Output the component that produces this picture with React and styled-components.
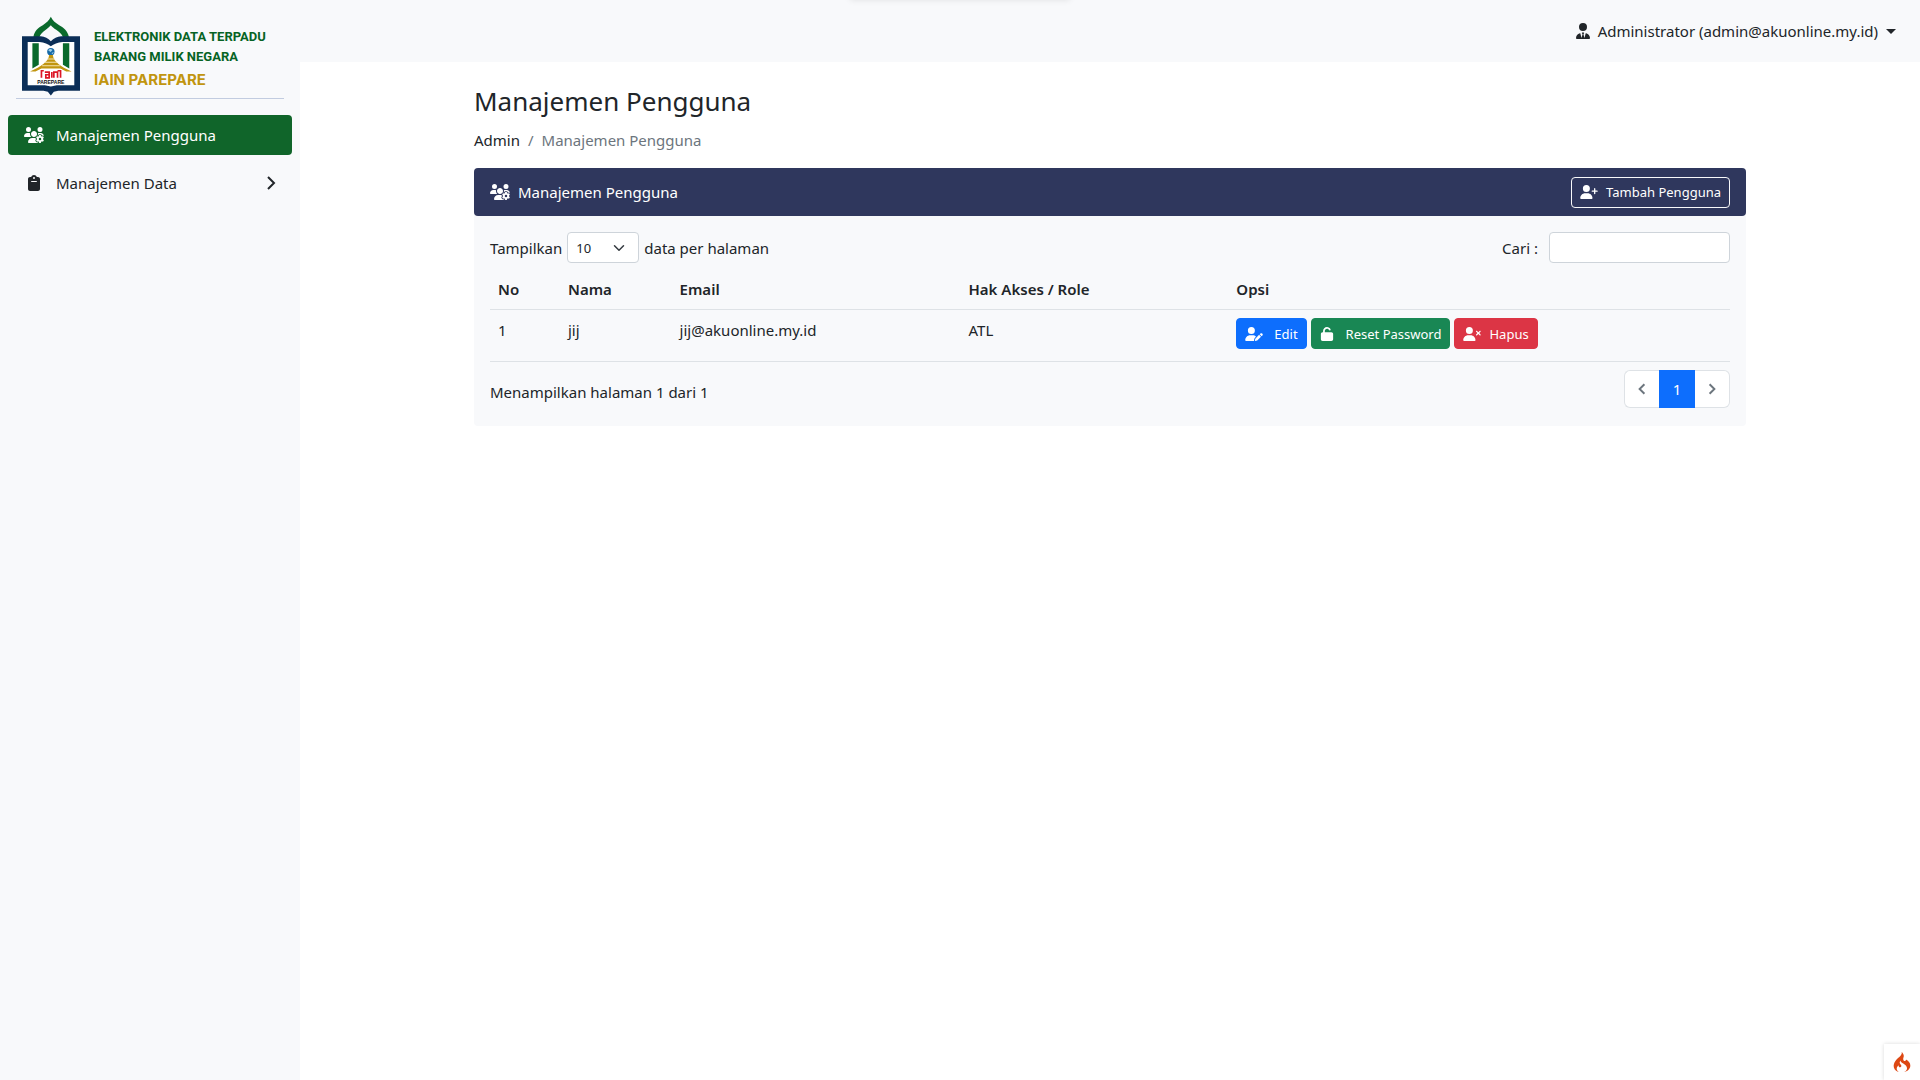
import React from 'react';
import styled, { createGlobalStyle } from 'styled-components';
import {
  FaUsersGear, FaUserTie, FaUserPlus, FaUserPen, FaUserXmark, FaUnlock, FaClipboard,
} from 'react-icons/fa6';
import { SiCodeigniter } from 'react-icons/si';

const GlobalStyle = createGlobalStyle`
  *, *::before, *::after { box-sizing: border-box; }
  body {
    margin: 0;
    background: #fff;
    color: #212529;
    font-family: "Noto Sans", "Open Sans", sans-serif;
    font-size: 15px;
    line-height: 24px;
  }
  button, input, select { font: inherit; color: inherit; }
  a { color: inherit; text-decoration: none; }
`;

const Shell = styled.div`
  display: flex;
  min-height: 100vh;
`;

const Sidebar = styled.aside`
  flex: none;
  width: 300px;
  padding: 16px 8px;
  background: #f8f9fb;
`;

const Brand = styled.a`
  display: flex;
  align-items: flex-start;
  gap: 14px;
  height: 83px;
  margin: 0 8px 16px;
  padding-left: 6px;
  border-bottom: 1px solid #c2cce0;
`;

const Emblem = styled.svg`
  flex: none;
  width: 58px;
  height: 80px;
`;

const BrandText = styled.span`
  display: flex;
  flex-direction: column;
  padding-top: 11px;
`;

const BrandLine = styled.span`
  color: #066324;
  font-family: Roboto, "Liberation Sans", sans-serif;
  font-size: 13px;
  font-weight: 700;
  line-height: 20px;
  white-space: nowrap;
`;

const BrandOrg = styled.span`
  color: #c1950f;
  font-family: Inter, sans-serif;
  font-size: 15px;
  font-weight: 700;
  line-height: 26px;
`;

const NavList = styled.nav`
  display: flex;
  flex-direction: column;
  gap: 8px;
`;

const NavItem = styled.a`
  display: flex;
  align-items: center;
  gap: 12px;
  height: 40px;
  padding: 0 16px;
  border-radius: 4px;
  background: ${(p) => (p.$active ? '#10652a' : 'transparent')};
  color: ${(p) => (p.$active ? '#fff' : '#212529')};
`;

const NavIcon = styled.span`
  display: flex;
  justify-content: center;
  width: 20px;
`;

const NavArrow = styled.svg`
  width: 10px;
  height: 16px;
  margin-left: auto;
`;

const Icon = styled.svg`
  flex: none;
  width: ${(p) => p.$w}px;
  height: ${(p) => p.$h || 16}px;
`;

const Content = styled.div`
  flex: 1;
  min-width: 0;
`;

const Topbar = styled.header`
  display: flex;
  align-items: center;
  justify-content: flex-end;
  height: 62px;
  padding: 0 24px;
  background: #f8f9fb;
`;

const UserMenu = styled.button`
  display: flex;
  align-items: center;
  gap: 8px;
  padding: 0;
  border: 0;
  background: none;
`;

const Caret = styled.span`
  border-top: 5px solid;
  border-left: 5px solid transparent;
  border-right: 5px solid transparent;
`;

const Main = styled.main`
  max-width: 1320px;
  margin: 0 auto;
  padding: 24px;
`;

const Title = styled.h1`
  margin: 0 0 12px;
  font-size: 26px;
  font-weight: 400;
  line-height: 30px;
`;

const Breadcrumb = styled.nav`
  display: flex;
  gap: 8px;
  margin-bottom: 16px;
  color: #6c757d;
`;

const Crumb = styled.a`
  color: #212529;
`;

const Card = styled.section`
  border-radius: 4px;
  background: #f8f9fb;
`;

const CardHeader = styled.div`
  display: flex;
  align-items: center;
  justify-content: space-between;
  height: 48px;
  padding: 0 16px;
  border-radius: 4px;
  background: #2f375d;
  color: #fff;
`;

const CardTitle = styled.h2`
  display: flex;
  align-items: center;
  gap: 8px;
  margin: 0;
  font-size: 15px;
  font-weight: 400;
`;

const CardBody = styled.div`
  padding: 16px 16px 18px;
`;

const Button = styled.button`
  display: inline-flex;
  align-items: center;
  gap: ${(p) => p.$gap || 8}px;
  height: 31px;
  padding: 0 8px;
  border: 1px solid ${(p) => p.$border || p.$fill};
  border-radius: 4px;
  background: ${(p) => p.$fill};
  color: #fff;
  font-size: 13px;
  white-space: nowrap;
`;

const Actions = styled.div`
  display: flex;
  gap: 4px;
`;

const Tools = styled.div`
  display: flex;
  justify-content: space-between;
  margin-bottom: 6px;
`;

const Field = styled.label`
  display: flex;
  align-items: center;
  gap: ${(p) => p.$gap}px;
`;

const SelectBox = styled.span`
  display: grid;
  align-items: center;
  width: 72px;

  > * { grid-area: 1 / 1; }
`;

const Select = styled.select`
  appearance: none;
  width: 100%;
  height: 31px;
  padding: 0 8px;
  border: 1px solid #ced4da;
  border-radius: 4px;
  background: #fff;
  font-size: 13px;
`;

const SelectArrow = styled.svg`
  justify-self: end;
  width: 12px;
  height: 12px;
  margin-right: 14px;
  pointer-events: none;
`;

const Search = styled.input`
  width: 181px;
  height: 31px;
  padding: 0 8px;
  border: 1px solid #ced4da;
  border-radius: 4px;
  background: #fff;
`;

const Table = styled.table`
  width: 100%;
  border-collapse: collapse;
  table-layout: fixed;
  text-align: left;
`;

const Col = styled.col`
  width: ${(p) => p.$w};
`;

const Th = styled.th`
  padding: 8px;
  border-bottom: 1px solid #dee2e6;
  font-weight: 600;
`;

const Td = styled.td`
  padding: 8px 8px 12px;
  border-bottom: 1px solid #dee2e6;
  vertical-align: top;
`;

const Footer = styled.div`
  display: flex;
  align-items: flex-start;
  justify-content: space-between;
  padding-top: 8px;
`;

const Info = styled.div`
  padding-top: 10px;
`;

const Pagination = styled.nav`
  display: flex;
`;

const PageButton = styled.button`
  display: flex;
  align-items: center;
  justify-content: center;
  width: ${(p) => (p.$active ? 36 : 35)}px;
  height: 38px;
  padding: 0;
  border: 1px solid ${(p) => (p.$active ? '#0d6efd' : '#dee2e6')};
  background: ${(p) => (p.$active ? '#0d6efd' : '#fff')};
  color: ${(p) => (p.$active ? '#fff' : '#6c757d')};

  &:first-child { border-right: 0; border-radius: 6px 0 0 6px; }
  &:last-child { border-left: 0; border-radius: 0 6px 6px 0; }
`;

const PageArrow = styled.svg`
  width: 8px;
  height: 14px;
  stroke-width: 2.4;
`;

const LoadingTab = styled.div`
  position: absolute;
  top: -8px;
  left: calc(50% - 110px);
  width: 220px;
  height: 8px;
  box-shadow: 0 0 6px rgba(0, 0, 0, 0.1);
`;

const DebugButton = styled.button`
  position: fixed;
  right: 0;
  bottom: 0;
  display: flex;
  align-items: center;
  justify-content: center;
  width: 36px;
  height: 36px;
  padding: 0;
  border: 0;
  background: #fff;
  color: #dd4814;
  box-shadow: 0 0 4px rgba(0, 0, 0, 0.15);
`;

const columns = [
  ['No', '70px'],
  ['Nama', '9%'],
  ['Email', '23.3%'],
  ['Hak Akses / Role', '21.6%'],
  ['Opsi', 'auto'],
];

function Logo() {
  return (
    <Emblem viewBox="36 22 173 238" aria-hidden="true">
      <path d="M70 84C73 66 84 57 98 49C109 42 117 35 122 24C127 35 135 42 147 49C161 57 172 66 176 84H158C155 76 148 70 138 63C131 58 126 54 122 49C118 54 113 58 107 63C97 70 91 76 88 84Z" fill="#0a6a2c" />
      <path d="M36 82H92Q110 83 122 97Q135 83 153 82H209V245H144L131 248L122 259L113 248L100 245H36Z" fill="#0b2e57" />
      <path d="M53 99H88Q110 101 122 112Q135 101 157 99H192V228H140L122 232L104 228H53Z" fill="#fff" />
      <path d="M67 103H86V167L67 178ZM158 103H177V178L158 167Z" fill="#0a6a2c" />
      <circle cx="122" cy="128" r="11" fill="#176aa8" />
      <path d="M114 124Q120 117 127 123L121 129ZM124 132L131 129L127 136Z" fill="#a5d2e8" />
      <path d="M117 138H128C130 158 150 172 184 187H168L150 178H94L76 187H60C94 172 115 158 117 138Z" fill="#c1950f" />
      <path d="M112 150H133M104 160H141M96 170H149" stroke="#f3e3b0" strokeWidth="3" />
      <path d="M90 180H155V209H90Z" fill="#fff" />
      <g fill="none" stroke="#dc1626" strokeWidth="5">
        <path d="M101 185H94V206M104 189H117V206H107V197H117M125 189V206M131 206V189H142V206M142 185H151V206" />
      </g>
      <text x="122" y="224" textAnchor="middle" fontFamily="Liberation Sans, sans-serif" fontSize="15" fontWeight="700" fill="#111">PAREPARE</text>
    </Emblem>
  );
}

function Arrow({ as: Part, left }) {
  return (
    <Part viewBox="0 0 10 16" fill="none" stroke="currentColor" strokeWidth="2" aria-hidden="true">
      <path d={left ? 'M8 2L2 8L8 14' : 'M2 2L8 8L2 14'} />
    </Part>
  );
}

export default function App() {
  return (
    <>
      <GlobalStyle />
      <Shell>
        <Sidebar>
          <Brand href="#">
            <Logo />
            <BrandText>
              <BrandLine>ELEKTRONIK DATA TERPADU</BrandLine>
              <BrandLine>BARANG MILIK NEGARA</BrandLine>
              <BrandOrg>IAIN PAREPARE</BrandOrg>
            </BrandText>
          </Brand>
          <NavList>
            <NavItem href="#" $active>
              <NavIcon><Icon as={FaUsersGear} $w={20} /></NavIcon>
              Manajemen Pengguna
            </NavItem>
            <NavItem href="#">
              <NavIcon><Icon as={FaClipboard} $w={12} /></NavIcon>
              Manajemen Data
              <Arrow as={NavArrow} />
            </NavItem>
          </NavList>
        </Sidebar>
        <Content>
          <Topbar>
            <UserMenu type="button">
              <Icon as={FaUserTie} $w={14} />
              Administrator (admin@akuonline.my.id)
              <Caret />
            </UserMenu>
          </Topbar>
          <Main>
            <Title>Manajemen Pengguna</Title>
            <Breadcrumb>
              <Crumb href="#">Admin</Crumb>
              <span>/</span>
              <span>Manajemen Pengguna</span>
            </Breadcrumb>
            <Card>
              <CardHeader>
                <CardTitle>
                  <Icon as={FaUsersGear} $w={20} />
                  Manajemen Pengguna
                </CardTitle>
                <Button type="button" $fill="transparent" $border="#f8f9fa">
                  <Icon as={FaUserPlus} $w={18} $h={14} />
                  Tambah Pengguna
                </Button>
              </CardHeader>
              <CardBody>
                <Tools>
                  <Field $gap={5}>
                    Tampilkan
                    <SelectBox>
                      <Select defaultValue="10">
                        <option>10</option>
                        <option>25</option>
                        <option>50</option>
                      </Select>
                      <SelectArrow viewBox="0 0 16 16" fill="none" stroke="#343a40" strokeWidth="2" strokeLinecap="round" strokeLinejoin="round">
                        <path d="m2 5 6 6 6-6" />
                      </SelectArrow>
                    </SelectBox>
                    data per halaman
                  </Field>
                  <Field $gap={11}>
                    Cari :
                    <Search type="search" />
                  </Field>
                </Tools>
                <Table>
                  <colgroup>
                    {columns.map(([name, width]) => <Col key={name} $w={width} />)}
                  </colgroup>
                  <thead>
                    <tr>{columns.map(([name]) => <Th key={name}>{name}</Th>)}</tr>
                  </thead>
                  <tbody>
                    <tr>
                      <Td>1</Td>
                      <Td>jij</Td>
                      <Td>jij@akuonline.my.id</Td>
                      <Td>ATL</Td>
                      <Td>
                        <Actions>
                          <Button type="button" $fill="#0d6efd" $gap={11}>
                            <Icon as={FaUserPen} $w={18} $h={14} />
                            Edit
                          </Button>
                          <Button type="button" $fill="#198754" $gap={12}>
                            <Icon as={FaUnlock} $w={14} $h={14} />
                            Reset Password
                          </Button>
                          <Button type="button" $fill="#dc3545">
                            <Icon as={FaUserXmark} $w={18} $h={14} />
                            Hapus
                          </Button>
                        </Actions>
                      </Td>
                    </tr>
                  </tbody>
                </Table>
                <Footer>
                  <Info>Menampilkan halaman 1 dari 1</Info>
                  <Pagination aria-label="Halaman">
                    <PageButton type="button" aria-label="Sebelumnya"><Arrow as={PageArrow} left /></PageButton>
                    <PageButton type="button" $active>1</PageButton>
                    <PageButton type="button" aria-label="Berikutnya"><Arrow as={PageArrow} /></PageButton>
                  </Pagination>
                </Footer>
              </CardBody>
            </Card>
          </Main>
        </Content>
      </Shell>
      <LoadingTab />
      <DebugButton type="button" aria-label="CodeIgniter">
        <Icon as={SiCodeigniter} $w={20} $h={20} />
      </DebugButton>
    </>
  );
}
